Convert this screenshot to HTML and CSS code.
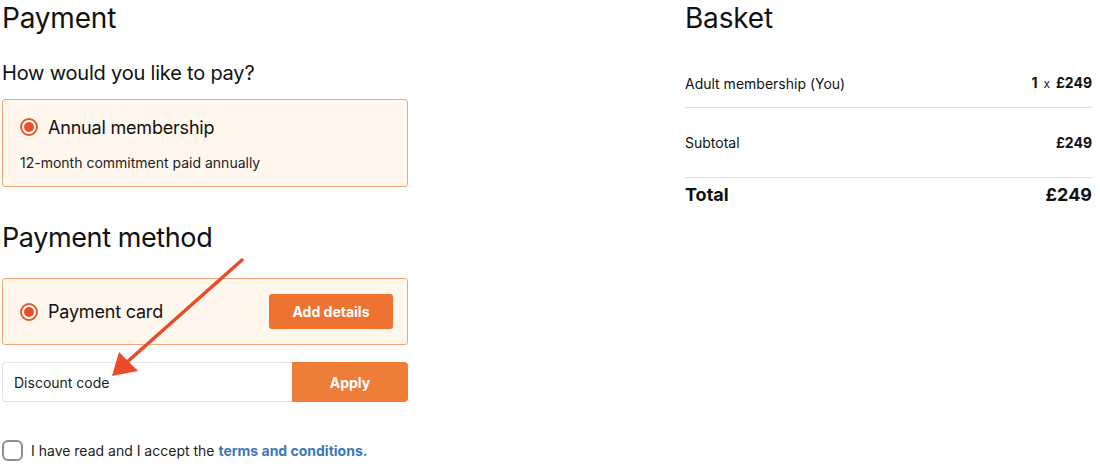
FILE: index.html
```html
<!DOCTYPE html>
<html lang="en">
<head>
<meta charset="utf-8">
<title>Payment</title>
<link rel="stylesheet" href="styles.css">
</head>
<body>
<div class="page">
  <section class="left">
    <h1 class="title">Payment</h1>
    <h2 class="subtitle">How would you like to pay?</h2>
    <div class="option option-plan">
      <div class="option-row">
        <span class="radio"><span class="radio-dot"></span></span>
        <span class="option-label">Annual membership</span>
      </div>
      <p class="option-note">12-month commitment paid annually</p>
    </div>

    <h1 class="title title-method">Payment method</h1>
    <div class="option option-card">
      <div class="option-row">
        <span class="radio"><span class="radio-dot"></span></span>
        <span class="option-label">Payment card</span>
      </div>
      <button class="btn btn-add">Add details</button>
    </div>

    <div class="discount">
      <div class="discount-input">Discount code</div>
      <button class="btn btn-apply">Apply</button>
    </div>

    <label class="terms">
      <span class="checkbox"></span>
      <span class="terms-text">I have read and I accept the <a class="terms-link">terms and conditions.</a></span>
    </label>
  </section>

  <section class="right">
    <h1 class="title">Basket</h1>
    <div class="basket-row row-item">
      <span>Adult membership (You)</span>
      <span class="qty"><b>1</b> <span class="times">x</span> <b>£249</b></span>
    </div>
    <div class="basket-row row-sub">
      <span>Subtotal</span>
      <b>£249</b>
    </div>
    <div class="basket-row row-total">
      <b>Total</b>
      <b>£249</b>
    </div>
  </section>

  <svg class="arrow" width="260" height="390" viewBox="0 0 260 390" aria-hidden="true">
    <line x1="242" y1="260" x2="126" y2="363" stroke="#e94b2b" stroke-width="3.5" stroke-linecap="round"/>
    <polygon points="112,376 119,352 138,371" fill="#e94b2b"/>
  </svg>
</div>
</body>
</html>
```

FILE: styles.css
```css
* { box-sizing: border-box; }
html, body { margin: 0; padding: 0; background: #ffffff; }
body {
  font-family: Inter, "Noto Sans", "Liberation Sans", sans-serif;
  color: #111111;
}
.page {
  position: relative;
  width: 1100px;
  height: 468px;
  display: flex;
  padding-left: 2px;
  overflow: hidden;
}
.left { width: 406px; }
.right { width: 407px; margin-left: 277px; }

.title {
  margin: 0;
  font-size: 28px;
  line-height: 36px;
  font-weight: 400;
  letter-spacing: -0.2px;
}
.subtitle {
  margin: 24px 0 0;
  font-size: 20px;
  line-height: 26px;
  font-weight: 400;
  letter-spacing: -0.2px;
}
.option {
  border: 1px solid #f3a472;
  background: #fff7ee;
  border-radius: 3px;
}
.option-plan {
  margin-top: 13px;
  height: 88px;
  padding: 14px 16px 0 17px;
}
.option-row {
  display: flex;
  align-items: center;
  gap: 10px;
  height: 26px;
}
.radio {
  width: 18px;
  height: 18px;
  border-radius: 50%;
  border: 2px solid #e9582c;
  background: #ffffff;
  display: flex;
  align-items: center;
  justify-content: center;
}
.radio-dot {
  width: 10px;
  height: 10px;
  border-radius: 50%;
  background: #e9502a;
}
.option-label {
  font-size: 18px;
  letter-spacing: -0.2px;
}
.option-note {
  margin: 13px 0 0;
  font-size: 14px;
  line-height: 20px;
  color: #222222;
}
.title-method {
  margin-top: 33px;
  font-size: 27px;
  letter-spacing: -0.4px;
}
.option-card {
  margin-top: 22px;
  height: 67px;
  padding: 0 14px 0 17px;
  display: flex;
  align-items: center;
  justify-content: space-between;
}
.btn {
  border: 0;
  font-family: inherit;
  font-weight: 700;
  color: #ffffff;
  font-size: 14px;
  cursor: pointer;
}
.btn-add {
  width: 124px;
  height: 35px;
  background: #ee7330;
  border-radius: 3px;
}
.discount {
  margin-top: 17px;
  display: flex;
  height: 40px;
}
.discount-input {
  flex: 1;
  border: 1px solid #e4e4e4;
  border-right: 0;
  border-radius: 4px 0 0 4px;
  font-size: 14px;
  display: flex;
  align-items: center;
  padding-left: 11px;
  color: #222222;
}
.btn-apply {
  width: 116px;
  background: #ed7d37;
  border-radius: 0 4px 4px 0;
}
.terms {
  margin-top: 38px;
  display: flex;
  align-items: center;
  gap: 8px;
  font-size: 14px;
  color: #222222;
}
.checkbox {
  width: 21px;
  height: 21px;
  border: 2px solid #8d8d8d;
  border-radius: 6px;
  background: #ffffff;
}
.terms-link {
  color: #3d78b6;
  font-weight: 700;
}

.basket-row {
  display: flex;
  justify-content: space-between;
  align-items: center;
  font-size: 14px;
  line-height: 20px;
}
.basket-row b { font-weight: 700; }
.row-item {
  margin-top: 37px;
  padding-bottom: 13px;
  border-bottom: 1px solid #dedede;
}
.qty { font-size: 14px; }
.times { font-size: 12px; margin: 0 2px; }
.row-sub {
  padding: 25px 0 24px;
  border-bottom: 1px solid #dedede;
}
.row-total {
  padding-top: 5px;
  font-size: 18px;
  line-height: 24px;
}
.arrow {
  position: absolute;
  left: 0;
  top: 0;
  pointer-events: none;
}
```
